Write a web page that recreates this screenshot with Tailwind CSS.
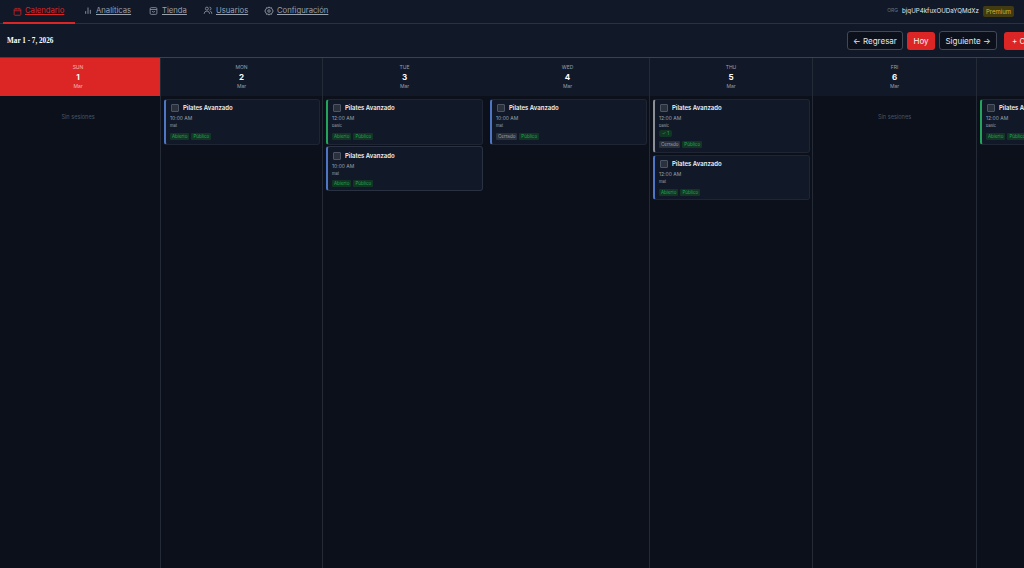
<!DOCTYPE html>
<html lang="es">
<head>
  <meta charset="UTF-8">
  <meta name="viewport" content="width=device-width, initial-scale=1">
  <title>Calendario</title>
  <script src="https://cdn.jsdelivr.net/npm/@tailwindcss/browser@4"></script>
</head>
<body class="bg-[#0b101b] h-[568px] w-[1024px] overflow-hidden flex flex-col font-['Inter',sans-serif] text-gray-400">
  <!-- nav -->
  <nav class="h-[24px] shrink-0 bg-[#111827] border-b border-[#2a3140] flex items-center justify-between">
    <div class="flex items-center h-full pl-[3px]">
      <a class="h-[24px] w-[72px] border-b-2 border-[#dc2626] -mb-px flex items-center gap-[3px] pl-[10px] text-[#dc2626] text-[7.7px] underline">
        <svg class="w-[9px] h-[9px] shrink-0" viewBox="0 0 24 24" fill="none" stroke="currentColor" stroke-width="2"><rect x="3" y="5" width="18" height="17" rx="2"/><path d="M3 10h18M8 2v5M16 2v5"/></svg>
        Calendario</a>
      <a class="ml-[9px] pb-px flex items-center gap-[4px] text-[7.7px] underline w-[65px]">
        <svg class="w-[8px] h-[9px] shrink-0" viewBox="0 0 24 24" fill="none" stroke="currentColor" stroke-width="2.5"><path d="M5 22v-8M12 22V3M19 22v-12"/></svg>
        Analíticas</a>
      <a class="pb-px flex items-center gap-[4px] text-[7.7px] underline w-[54px]">
        <svg class="w-[9px] h-[10px] shrink-0" viewBox="0 0 24 24" fill="none" stroke="currentColor" stroke-width="2"><rect x="3" y="3" width="18" height="18" rx="3"/><path d="M3 8h18M9 12a3 3 0 0 0 6 0"/></svg>
        Tienda</a>
      <a class="pb-px flex items-center gap-[3px] text-[7.7px] underline w-[61px]">
        <svg class="w-[10px] h-[9px] shrink-0" viewBox="0 0 24 24" fill="none" stroke="currentColor" stroke-width="2"><circle cx="9" cy="7" r="4"/><path d="M2 21v-2a6 6 0 0 1 6-5h2a6 6 0 0 1 6 5v2M16 3a4 4 0 0 1 0 8M22 21v-2a5 5 0 0 0-4-5"/></svg>
        Usuarios</a>
      <a class="pb-px flex items-center gap-[3px] text-[7.7px] underline">
        <svg class="w-[10px] h-[10px] shrink-0" viewBox="0 0 24 24" fill="none" stroke="currentColor" stroke-width="2"><circle cx="12" cy="12" r="3"/><path d="M12 2l2 3 4-1 1 4 3 2-2 2 2 2-3 2-1 4-4-1-2 3-2-3-4 1-1-4-3-2 2-2-2-2 3-2 1-4 4 1z"/></svg>
        Configuración</a>
    </div>
    <div class="flex items-center gap-[4px] pr-[10px] pb-px">
      <span class="text-[5px] text-gray-500">ORG</span>
      <span class="text-[6.2px] text-gray-200">bjqUP4kfuxOUDaYQMdXz</span>
      <span class="text-[6px] bg-[#423a10] text-[#d9b520] rounded-[2px] px-[3px] py-[2px] leading-[7px]">Premium</span>
    </div>
  </nav>
  <!-- toolbar -->
  <div class="h-[34px] shrink-0 bg-[#111827] border-b border-[#3a4150] flex items-center justify-between pl-[7px] overflow-hidden">
    <h1 class="font-['Liberation_Serif',serif] text-white font-bold text-[7.2px] mt-[2px]">Mar 1 - 7, 2026</h1>
    <div class="flex items-center gap-[4px] text-[8px] mr-[-28px]">
      <button class="h-[19px] w-[56px] border border-[#414857] bg-[#0b101b] text-gray-200 rounded-[3px]">← Regresar</button>
      <button class="h-[18px] w-[28px] bg-[#dc2626] text-gray-100 rounded-[3px]">Hoy</button>
      <button class="h-[19px] w-[58px] border border-[#414857] bg-[#0b101b] text-gray-200 rounded-[3px]">Siguiente →</button>
      <button class="ml-[3px] h-[18px] w-[48px] bg-[#dc2626] text-gray-100 rounded-[3px] text-left pl-[8px]">+ Crear</button>
    </div>
  </div>
  <!-- week -->
  <div class="flex-1 flex overflow-hidden">
    <section class="w-[160px] shrink-0 flex flex-col">
      <div class="h-[38px] bg-[#dc2626] flex flex-col items-center pt-[6px] pr-[4px] text-[#f6b6b6]">
        <span class="text-[5px] leading-[7px]">SUN</span>
        <span class="text-[8px] leading-[12px] font-bold text-white">1</span>
        <span class="text-[5px] leading-[6px]">Mar</span>
      </div>
      <p class="text-center text-[5.6px] text-gray-600 mt-[17px] pr-[4px]">Sin sesiones</p>
    </section>
    <section class="w-[162px] shrink-0 border-l border-[#252b36] flex flex-col">
      <div class="h-[38px] bg-[#111827] flex flex-col items-center pt-[6px]">
        <span class="text-[5px] leading-[7px]">MON</span>
        <span class="text-[8px] leading-[12px] font-bold text-white">2</span>
        <span class="text-[5px] leading-[6px]">Mar</span>
      </div>
      <div class="p-[3px] pr-[2px] flex flex-col gap-px">
        <article class="h-[46px] bg-[#111827] rounded-[3px] border border-[#1f2532] border-l-2 border-l-[#4f76c4] pl-[4px] pt-[3px]">
          <div class="flex items-center gap-[4px] h-[9px] pl-px"><span class="w-[8px] h-[8px] rounded-[1px] border border-[#4b5563] bg-[#2a303c]"></span><b class="text-[6px] font-semibold text-gray-100">Pilates Avanzado</b></div>
          <p class="text-[5px] leading-[7px] mt-[3px]">10:00 AM</p>
          <p class="text-[4px] leading-[7px]">mat</p>
          <div class="flex gap-[2px] mt-[4px] text-[4.5px]"><span class="bg-[#123524] text-[#22a55a] rounded-[1px] px-[2px] leading-[7px]">Abierto</span><span class="bg-[#123524] text-[#22a55a] rounded-[1px] px-[2px] leading-[7px]">Público</span></div>
        </article>
      </div>
    </section>
    <section class="w-[164px] shrink-0 border-l border-[#252b36] flex flex-col">
      <div class="h-[38px] bg-[#111827] flex flex-col items-center pt-[6px]">
        <span class="text-[5px] leading-[7px]">TUE</span>
        <span class="text-[8px] leading-[12px] font-bold text-white">3</span>
        <span class="text-[5px] leading-[6px]">Mar</span>
      </div>
      <div class="p-[3px] flex flex-col gap-px">
        <article class="h-[46px] bg-[#111827] rounded-[3px] border border-[#1f2532] border-l-2 border-l-[#22a55a] pl-[4px] pt-[3px]">
          <div class="flex items-center gap-[4px] h-[9px] pl-px"><span class="w-[8px] h-[8px] rounded-[1px] border border-[#4b5563] bg-[#2a303c]"></span><b class="text-[6px] font-semibold text-gray-100">Pilates Avanzado</b></div>
          <p class="text-[5px] leading-[7px] mt-[3px]">12:00 AM</p>
          <p class="text-[4px] leading-[7px]">basic</p>
          <div class="flex gap-[2px] mt-[4px] text-[4.5px]"><span class="bg-[#123524] text-[#22a55a] rounded-[1px] px-[2px] leading-[7px]">Abierto</span><span class="bg-[#123524] text-[#22a55a] rounded-[1px] px-[2px] leading-[7px]">Público</span></div>
        </article>
        <article class="h-[45px] bg-[#111827] rounded-[3px] border border-[#2a3140] border-l-2 border-l-[#4f76c4] pl-[4px] pt-[4px]">
          <div class="flex items-center gap-[4px] h-[9px] pl-px"><span class="w-[8px] h-[8px] rounded-[1px] border border-[#4b5563] bg-[#2a303c]"></span><b class="text-[6px] font-semibold text-gray-100">Pilates Avanzado</b></div>
          <p class="text-[5px] leading-[7px] mt-[3px]">10:00 AM</p>
          <p class="text-[4px] leading-[7px]">mat</p>
          <div class="flex gap-[2px] mt-[3px] text-[4.5px]"><span class="bg-[#123524] text-[#22a55a] rounded-[1px] px-[2px] leading-[7px]">Abierto</span><span class="bg-[#123524] text-[#22a55a] rounded-[1px] px-[2px] leading-[7px]">Público</span></div>
        </article>
      </div>
    </section>
    <section class="w-[163px] shrink-0 flex flex-col">
      <div class="h-[38px] bg-[#111827] flex flex-col items-center pt-[6px]">
        <span class="text-[5px] leading-[7px]">WED</span>
        <span class="text-[8px] leading-[12px] font-bold text-white">4</span>
        <span class="text-[5px] leading-[6px]">Mar</span>
      </div>
      <div class="p-[3px] pl-[4px] pr-[2px] flex flex-col gap-px">
        <article class="h-[46px] bg-[#111827] rounded-[3px] border border-[#1f2532] border-l-2 border-l-[#4f76c4] pl-[4px] pt-[3px]">
          <div class="flex items-center gap-[4px] h-[9px] pl-px"><span class="w-[8px] h-[8px] rounded-[1px] border border-[#4b5563] bg-[#2a303c]"></span><b class="text-[6px] font-semibold text-gray-100">Pilates Avanzado</b></div>
          <p class="text-[5px] leading-[7px] mt-[3px]">10:00 AM</p>
          <p class="text-[4px] leading-[7px]">mat</p>
          <div class="flex gap-[2px] mt-[4px] text-[4.5px]"><span class="bg-[#2a303c] text-gray-400 rounded-[1px] px-[2px] leading-[7px]">Cerrado</span><span class="bg-[#123524] text-[#22a55a] rounded-[1px] px-[2px] leading-[7px]">Público</span></div>
        </article>
      </div>
    </section>
    <section class="w-[163px] shrink-0 border-l border-[#252b36] flex flex-col">
      <div class="h-[38px] bg-[#111827] flex flex-col items-center pt-[6px]">
        <span class="text-[5px] leading-[7px]">THU</span>
        <span class="text-[8px] leading-[12px] font-bold text-white">5</span>
        <span class="text-[5px] leading-[6px]">Mar</span>
      </div>
      <div class="p-[3px] pr-[2px] flex flex-col gap-[2px]">
        <article class="h-[54px] bg-[#111827] rounded-[3px] border border-[#1f2532] border-l-2 border-l-[#8a8f98] pl-[4px] pt-[3px]">
          <div class="flex items-center gap-[4px] h-[9px] pl-px"><span class="w-[8px] h-[8px] rounded-[1px] border border-[#4b5563] bg-[#2a303c]"></span><b class="text-[6px] font-semibold text-gray-100">Pilates Avanzado</b></div>
          <p class="text-[5px] leading-[7px] mt-[3px]">12:00 AM</p>
          <p class="text-[4px] leading-[7px]">basic</p>
          <span class="block w-fit bg-[#123524] text-[#22a55a] rounded-[2px] px-[3px] text-[4.5px] leading-[7px] mt-[1px]">✓ 1</span>
          <div class="flex gap-[2px] mt-[4px] text-[4.5px]"><span class="bg-[#2a303c] text-gray-400 rounded-[1px] px-[2px] leading-[7px]">Cerrado</span><span class="bg-[#123524] text-[#22a55a] rounded-[1px] px-[2px] leading-[7px]">Público</span></div>
        </article>
        <article class="h-[45px] bg-[#111827] rounded-[3px] border border-[#1f2532] border-l-2 border-l-[#4f76c4] pl-[4px] pt-[3px]">
          <div class="flex items-center gap-[4px] h-[9px] pl-px"><span class="w-[8px] h-[8px] rounded-[1px] border border-[#4b5563] bg-[#2a303c]"></span><b class="text-[6px] font-semibold text-gray-100">Pilates Avanzado</b></div>
          <p class="text-[5px] leading-[7px] mt-[3px]">12:00 AM</p>
          <p class="text-[4px] leading-[7px]">mat</p>
          <div class="flex gap-[2px] mt-[4px] text-[4.5px]"><span class="bg-[#123524] text-[#22a55a] rounded-[1px] px-[2px] leading-[7px]">Abierto</span><span class="bg-[#123524] text-[#22a55a] rounded-[1px] px-[2px] leading-[7px]">Público</span></div>
        </article>
      </div>
    </section>
    <section class="w-[164px] shrink-0 border-l border-[#252b36] flex flex-col">
      <div class="h-[38px] bg-[#111827] flex flex-col items-center pt-[6px]">
        <span class="text-[5px] leading-[7px]">FRI</span>
        <span class="text-[8px] leading-[12px] font-bold text-white">6</span>
        <span class="text-[5px] leading-[6px]">Mar</span>
      </div>
      <p class="text-center text-[5.6px] text-gray-600 mt-[17px]">Sin sesiones</p>
    </section>
    <section class="w-[163px] shrink-0 border-l border-[#252b36] flex flex-col">
      <div class="h-[38px] bg-[#111827] flex flex-col items-center pt-[6px]">
        <span class="text-[5px] leading-[7px]">SAT</span>
        <span class="text-[8px] leading-[12px] font-bold text-white">7</span>
        <span class="text-[5px] leading-[6px]">Mar</span>
      </div>
      <div class="p-[3px] pr-[2px] flex flex-col gap-px">
        <article class="h-[46px] bg-[#111827] rounded-[3px] border border-[#1f2532] border-l-2 border-l-[#22a55a] pl-[4px] pt-[3px]">
          <div class="flex items-center gap-[4px] h-[9px] pl-px"><span class="w-[8px] h-[8px] rounded-[1px] border border-[#4b5563] bg-[#2a303c]"></span><b class="text-[6px] font-semibold text-gray-100">Pilates Avanzado</b></div>
          <p class="text-[5px] leading-[7px] mt-[3px]">12:00 AM</p>
          <p class="text-[4px] leading-[7px]">basic</p>
          <div class="flex gap-[2px] mt-[4px] text-[4.5px]"><span class="bg-[#123524] text-[#22a55a] rounded-[1px] px-[2px] leading-[7px]">Abierto</span><span class="bg-[#123524] text-[#22a55a] rounded-[1px] px-[2px] leading-[7px]">Público</span></div>
        </article>
      </div>
    </section>
  </div>
</body>
</html>
